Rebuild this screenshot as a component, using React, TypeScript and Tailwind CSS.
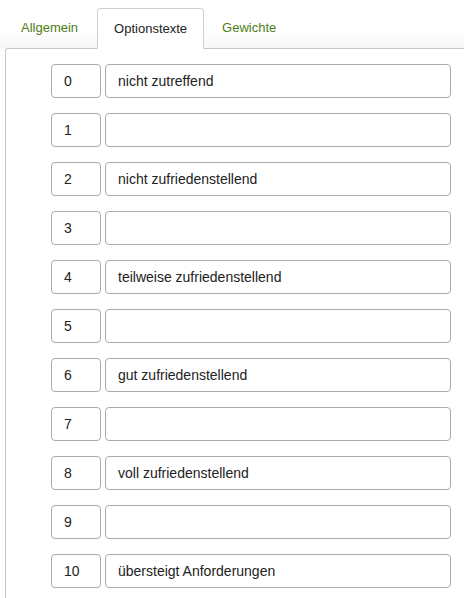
const rows: [string, string][] = [
  ["0", "nicht zutreffend"],
  ["1", ""],
  ["2", "nicht zufriedenstellend"],
  ["3", ""],
  ["4", "teilweise zufriedenstellend"],
  ["5", ""],
  ["6", "gut zufriedenstellend"],
  ["7", ""],
  ["8", "voll zufriedenstellend"],
  ["9", ""],
  ["10", "übersteigt Anforderungen"],
];

export default function App() {
  return (
    <div className="w-[464px] h-[598px] overflow-hidden bg-white font-['Liberation_Sans',Arial,sans-serif] text-[13px] text-[#222]">
      {/* Tabs */}
      <div className="flex pl-[5px] pt-[8px] bg-gradient-to-b from-white from-60% to-[#f6f6f6]">
        <div className="px-[16px] h-[40px] mr-[3px] flex items-center text-[#4e7d14]">Allgemein</div>
        <div className="px-[16px] h-[41px] -mb-px flex items-center bg-white border border-[#cfcfcf] border-b-white rounded-t-[4px] relative z-10">
          Optionstexte
        </div>
        <div className="px-[18px] h-[40px] flex items-center text-[#4e7d14]">Gewichte</div>
      </div>

      {/* Panel */}
      <div className="ml-[5px] h-[560px] border-l border-t border-[#c4c4c4] rounded-tl-[3px] pt-[15px] pl-[45px] pr-[13px] text-[14px]">
        <div className="flex flex-col gap-[15px]">
          {rows.map(([n, t]) => (
            <div key={n} className="flex gap-[4px]">
              <div className="w-[50px] h-[34px] border border-[#ababab] rounded-[4px] flex items-center pl-[12px]">{n}</div>
              <div className="flex-1 h-[34px] border border-[#ababab] rounded-[4px] flex items-center pl-[12px]">{t}</div>
            </div>
          ))}
        </div>
      </div>
    </div>
  );
}
